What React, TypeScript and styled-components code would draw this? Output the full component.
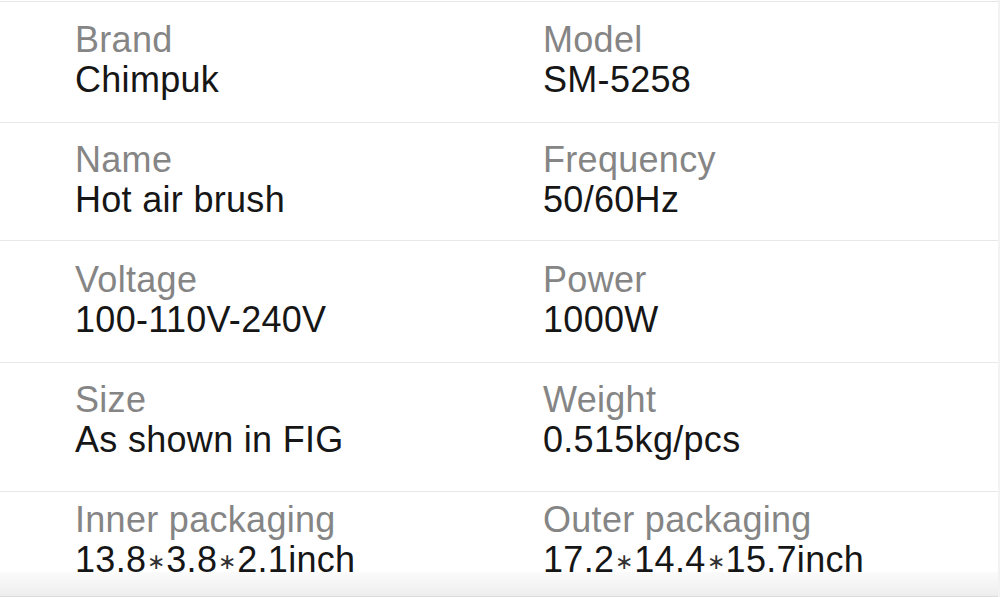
import styled, { createGlobalStyle } from "styled-components";

const GlobalStyle = createGlobalStyle`
	html, body {
		margin: 0;
		padding: 0;
		background: #ffffff;
	}
	body {
		font-family: "Liberation Sans", Arial, sans-serif;
	}
`;

const Page = styled.div`
	width: 998px;
	height: 597px;
	border-right: 2px solid #f2f2f2;
	display: flex;
	flex-direction: column;
	overflow: hidden;
`;

const Viewport = styled.div`
	height: 571px;
	overflow: hidden;
	padding-top: 1px;
`;

const Table = styled.div`
	border-top: 1px solid #e6e6e6;
	display: flex;
	flex-direction: column;
`;

const Row = styled.div<{ $top: number; $bottom: number }>`
	display: grid;
	grid-template-columns: 468px 1fr;
	padding: ${(p) => p.$top}px 0 ${(p) => p.$bottom}px 75px;
	border-bottom: 1px solid #e8e8e8;
`;

const Cell = styled.div`
	display: flex;
	flex-direction: column;
	font-size: 36px;
	line-height: 40px;
	letter-spacing: 0.3px;
	white-space: nowrap;
`;

const Label = styled.span`
	color: #858585;
`;

const Value = styled.span`
	color: #161616;
`;

const Star = styled.span`
	display: inline-block;
	font-size: 22px;
	letter-spacing: 0;
	margin: 0 1px;
	color: #333333;
	transform: translateY(-3px);
`;

const BottomShade = styled.div`
	flex: 1;
	background: linear-gradient(to bottom, #fbfbfb, #eeeeee);
	border-bottom: 1px solid #dcdcdc;
`;

const dims = (s: string) => {
	const parts = s.split("*");
	return parts.map((p, i) => (
		<span key={i}>
			{i > 0 && <Star>∗</Star>}
			{p}
		</span>
	));
};

const rows = [
	{ top: 18, bottom: 22, a: ["Brand", "Chimpuk"], b: ["Model", "SM-5258"] },
	{ top: 17, bottom: 20, a: ["Name", "Hot air brush"], b: ["Frequency", "50/60Hz"] },
	{ top: 19, bottom: 22, a: ["Voltage", "100-110V-240V"], b: ["Power", "1000W"] },
	{ top: 17, bottom: 31, a: ["Size", "As shown in FIG"], b: ["Weight", "0.515kg/pcs"] },
	{
		top: 8,
		bottom: 20,
		a: ["Inner packaging", "13.8*3.8*2.1inch"],
		b: ["Outer packaging", "17.2*14.4*15.7inch"],
	},
];

export default function App() {
	return (
		<>
			<GlobalStyle />
			<Page>
				<Viewport>
					<Table>
						{rows.map((r) => (
							<Row key={r.a[0]} $top={r.top} $bottom={r.bottom}>
								<Cell>
									<Label>{r.a[0]}</Label>
									<Value>{dims(r.a[1])}</Value>
								</Cell>
								<Cell>
									<Label>{r.b[0]}</Label>
									<Value>{dims(r.b[1])}</Value>
								</Cell>
							</Row>
						))}
					</Table>
				</Viewport>
				<BottomShade />
			</Page>
		</>
	);
}
